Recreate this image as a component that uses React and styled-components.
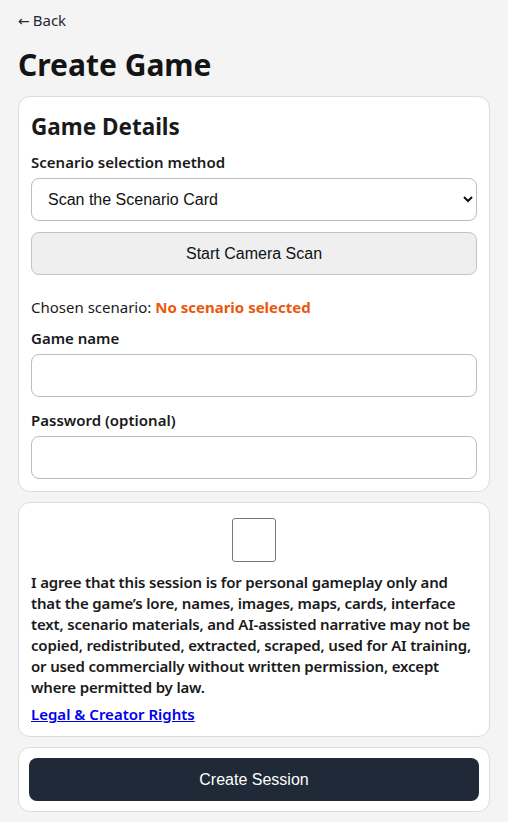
import React from "react";
import styled, { createGlobalStyle } from "styled-components";

const GlobalStyle = createGlobalStyle`
  body {
    margin: 0;
    background: #f4f4f4;
    font-family: "Noto Sans", "Segoe UI", sans-serif;
    color: #1a1a1a;
  }
`;

const Page = styled.main`
  padding: 9px 18px 12px;
  display: flex;
  flex-direction: column;
`;

const BackLink = styled.a`
  font-size: 15px;
  color: #1f2937;
  text-decoration: none;
  line-height: 22px;
`;

const Arrow = styled.span`
  font-family: "DejaVu Sans", sans-serif;
  font-size: 14px;
  margin-right: 3px;
`;

const Title = styled.h1`
  font-size: 30px;
  font-weight: 700;
  margin: 13px 0 11px;
  line-height: 40px;
  color: #141414;
`;

const Card = styled.section`
  background: #fff;
  border: 1px solid #dcdcdc;
  border-radius: 12px;
  padding: ${(p) => p.$pad || "12px"};
  margin-bottom: 10px;
  display: flex;
  flex-direction: column;
`;

const CardTitle = styled.h2`
  font-size: 22.5px;
  font-weight: 700;
  margin: 3px 0 0;
  line-height: 30px;
`;

const Label = styled.label`
  font-size: 15px;
  font-weight: 600;
  line-height: 20px;
  margin: ${(p) => p.$mt || 11}px 0 6px;
  display: block;
`;

const Select = styled.select`
  height: 43px;
  border: 1px solid #bdbdbd;
  border-radius: 8px;
  background: #fff;
  font-family: "Liberation Sans", Arial, sans-serif;
  font-size: 16px;
  padding: 0 12px;
  color: #111;
`;

const GrayButton = styled.button`
  margin-top: 11px;
  height: 43px;
  border: 1px solid #c4c4c4;
  border-radius: 8px;
  background: #efefef;
  font-family: "Liberation Sans", Arial, sans-serif;
  font-size: 16px;
  color: #111;
`;

const Chosen = styled.p`
  font-size: 15px;
  margin: 22px 0 0;
  line-height: 20px;
`;

const Warn = styled.span`
  color: #ea580c;
  font-weight: 700;
`;

const TextInput = styled.input`
  height: 43px;
  box-sizing: border-box;
  border: 1px solid #bdbdbd;
  border-radius: 8px;
  background: #fff;
  font-size: 16px;
  padding: 0 10px;
  margin: 0;
`;

const CheckRow = styled.div`
  display: flex;
  justify-content: center;
  padding: 3px 0 10px;
`;

const BigCheck = styled.input`
  appearance: none;
  width: 44px;
  height: 44px;
  margin: 0;
  border: 1px solid #767676;
  border-radius: 3px;
  background: #fff;
`;

const Agreement = styled.p`
  font-size: 15px;
  font-weight: 600;
  line-height: 21px;
  letter-spacing: -0.16px;
  margin: 0;
  color: #1a1a1a;
`;

const LegalLink = styled.a`
  font-size: 15px;
  font-weight: 600;
  color: #0000ee;
  text-decoration: underline;
  margin-top: 6px;
  line-height: 20px;
  align-self: flex-start;
`;

const PrimaryButton = styled.button`
  height: 43px;
  border: none;
  border-radius: 8px;
  background: #1f2937;
  color: #fff;
  font-family: "Liberation Sans", Arial, sans-serif;
  font-size: 16px;
`;

export default function App() {
  return (
    <>
      <GlobalStyle />
      <Page>
        <BackLink href="#">
          <Arrow>←</Arrow>Back
        </BackLink>
        <Title>Create Game</Title>

        <Card>
          <CardTitle>Game Details</CardTitle>
          <Label $mt={10}>Scenario selection method</Label>
          <Select defaultValue="scan">
            <option value="scan">Scan the Scenario Card</option>
            <option value="list">Pick from list</option>
          </Select>
          <GrayButton>Start Camera Scan</GrayButton>
          <Chosen>
            Chosen scenario: <Warn>No scenario selected</Warn>
          </Chosen>
          <Label>Game name</Label>
          <TextInput type="text" />
          <Label $mt={13}>Password (optional)</Label>
          <TextInput type="password" />
        </Card>

        <Card>
          <CheckRow>
            <BigCheck type="checkbox" />
          </CheckRow>
          <Agreement>
            I agree that this session is for personal gameplay only and that the
            game’s lore, names, images, maps, cards, interface text, scenario
            materials, and AI-assisted narrative may not be copied,
            redistributed, extracted, scraped, used for AI training, or used
            commercially without written permission, except where permitted by
            law.
          </Agreement>
          <LegalLink href="#">Legal &amp; Creator Rights</LegalLink>
        </Card>

        <Card $pad="10px">
          <PrimaryButton>Create Session</PrimaryButton>
        </Card>
      </Page>
    </>
  );
}
